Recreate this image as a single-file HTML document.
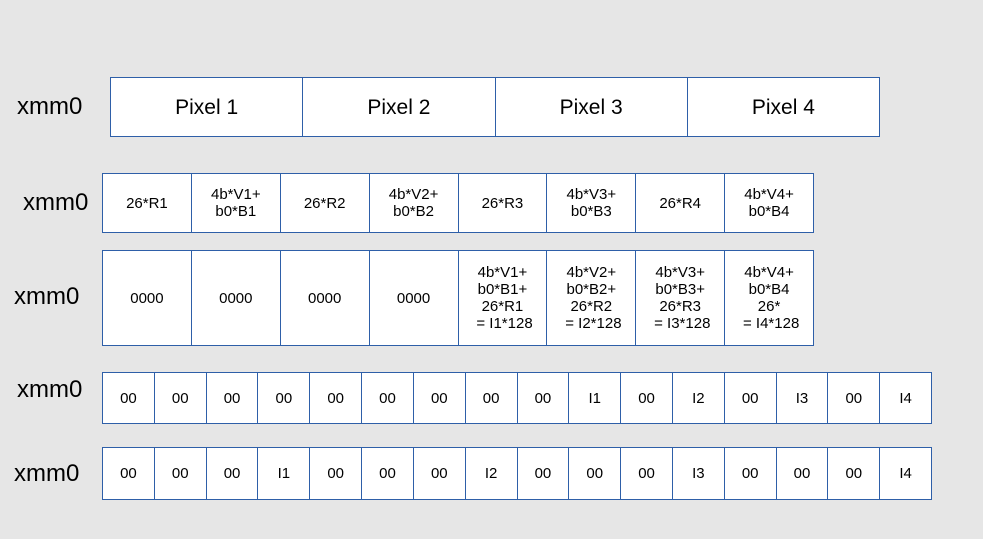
<!DOCTYPE html>
<html><head><meta charset="utf-8"><style>
body{margin:0;width:983px;height:539px;background:#e6e6e6;position:relative;overflow:hidden;font-family:"Liberation Sans",Arial,sans-serif;color:#000}
.lab{position:absolute;font-size:24px;line-height:24px}
.row{position:absolute;display:flex;border:1px solid #2e5fa8;box-sizing:border-box;background:#fff}
.row div{flex:1;border-left:1px solid #2e5fa8;display:flex;align-items:center;justify-content:center;text-align:center;line-height:17px}
.row div:first-child{border-left:none}
.r1 div{font-size:21px}
.r2 div,.r3 div{font-size:15px}
.r4 div{font-size:15px}
</style></head><body>
<div class="lab" style="left:17px;top:95px">xmm0</div>
<div class="row r1" style="left:110px;top:77px;width:770px;height:60px"><div>Pixel 1</div><div>Pixel 2</div><div>Pixel 3</div><div>Pixel 4</div></div>

<div class="lab" style="left:23px;top:191px">xmm0</div>
<div class="row r2" style="left:102px;top:173px;width:712px;height:60px"><div>26*R1</div><div>4b*V1+<br>b0*B1</div><div>26*R2</div><div>4b*V2+<br>b0*B2</div><div>26*R3</div><div>4b*V3+<br>b0*B3</div><div>26*R4</div><div>4b*V4+<br>b0*B4</div></div>

<div class="lab" style="left:14px;top:285px">xmm0</div>
<div class="row r3" style="left:102px;top:250px;width:712px;height:96px"><div>0000</div><div>0000</div><div>0000</div><div>0000</div><div>4b*V1+<br>b0*B1+<br>26*R1<br>&nbsp;= I1*128</div><div>4b*V2+<br>b0*B2+<br>26*R2<br>&nbsp;= I2*128</div><div>4b*V3+<br>b0*B3+<br>26*R3<br>&nbsp;= I3*128</div><div>4b*V4+<br>b0*B4<br>26*<br>&nbsp;= I4*128</div></div>

<div class="lab" style="left:17px;top:378px">xmm0</div>
<div class="row r4" style="left:102px;top:372px;width:830px;height:52px"><div>00</div><div>00</div><div>00</div><div>00</div><div>00</div><div>00</div><div>00</div><div>00</div><div>00</div><div>I1</div><div>00</div><div>I2</div><div>00</div><div>I3</div><div>00</div><div>I4</div></div>

<div class="lab" style="left:14px;top:462px">xmm0</div>
<div class="row r4" style="left:102px;top:447px;width:830px;height:53px"><div>00</div><div>00</div><div>00</div><div>I1</div><div>00</div><div>00</div><div>00</div><div>I2</div><div>00</div><div>00</div><div>00</div><div>I3</div><div>00</div><div>00</div><div>00</div><div>I4</div></div>
</body></html>
